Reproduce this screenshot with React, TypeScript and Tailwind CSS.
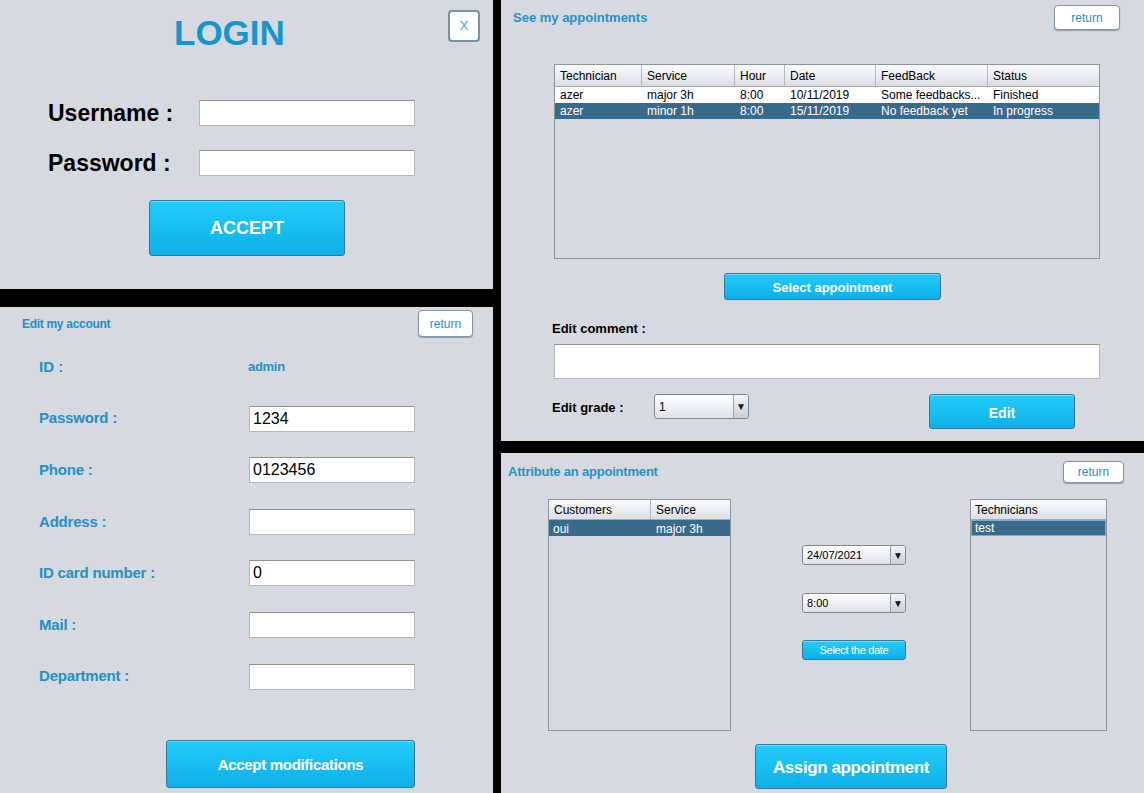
import React from 'react';

const FONT = "font-['Liberation_Sans',Arial,sans-serif]";
const PANEL = 'bg-[#d6d9df]';
const BLUE_BTN =
  'bg-linear-to-b from-[#22ccfa] to-[#0fb0e8] border border-[#3a7592] rounded-[3px] text-white font-bold flex items-center justify-center shadow-[inset_0_1px_0_rgba(255,255,255,0.35)]';
const RETURN_BTN =
  'bg-white border border-[#8194a8] rounded-[4px] shadow-[0_1px_1px_rgba(60,80,100,0.45)] text-[#2a91c6] text-[12px] flex items-center justify-center';
const FIELD = 'bg-white border border-[#b4b6b9] border-t-[#8d8f92] h-[26px] flex items-center pl-[3px] text-[16px] text-black';

const APPOINTMENTS = [
  ['azer', 'major 3h', '8:00', '10/11/2019', 'Some feedbacks...', 'Finished'],
  ['azer', 'minor 1h', '8:00', '15/11/2019', 'No feedback yet', 'In progress'],
];

const ACCOUNT_ROWS = [
  { label: 'Password :', value: '1234' },
  { label: 'Phone :', value: '0123456' },
  { label: 'Address :', value: '' },
  { label: 'ID card number :', value: '0' },
  { label: 'Mail :', value: '' },
  { label: 'Department :', value: '' },
];

function Combo({ value, className }: { value: string; className: string }) {
  return (
    <div
      className={`${className} flex rounded-[3px] border border-[#7d8894] bg-linear-to-b from-white to-[#dfe2e7] overflow-hidden`}
    >
      <div className="flex-1 flex items-center pl-[4px] text-black">{value}</div>
      <div className="w-[15px] border-l border-[#98a2ad] bg-linear-to-b from-[#f4f5f7] to-[#c9cfd7] flex items-center justify-center text-[10px] text-[#15181d]">
        ▼
      </div>
    </div>
  );
}

function HeaderCell({ children, last }: { children: React.ReactNode; last?: boolean }) {
  return (
    <div className={`pl-[5px] flex items-center ${last ? '' : 'border-r border-[#b5b9bf]'}`}>{children}</div>
  );
}

function LoginPanel() {
  return (
    <div className={`${PANEL} h-[289px] flex flex-col`}>
      <div className="h-[100px] flex items-start pt-[10px]">
        <div className="ml-[174px] mt-[5px] text-[35px] leading-none font-bold text-[#1796cc]">LOGIN</div>
        <div className="ml-auto mr-[13px] w-[32px] h-[32px] bg-white border-2 border-[#7890aa] rounded-[4px] flex items-center justify-center text-[13px] text-[#3aa3d6]">
          X
        </div>
      </div>
      <div className="flex items-center h-[26px] pl-[48px]">
        <div className="w-[151px] text-[23px] font-bold text-black">Username :</div>
        <div className={`${FIELD} w-[216px]`} />
      </div>
      <div className="flex items-center h-[26px] pl-[48px] mt-[24px]">
        <div className="w-[151px] text-[23px] font-bold text-black">Password :</div>
        <div className={`${FIELD} w-[216px]`} />
      </div>
      <div className={`${BLUE_BTN} ml-[149px] mt-[24px] w-[196px] h-[56px] text-[18px]`}>ACCEPT</div>
    </div>
  );
}

function AccountPanel() {
  return (
    <div className={`${PANEL} flex-1 flex flex-col`}>
      <div className="pt-[3px] flex items-center pl-[22px] pr-[20px]">
        <div className="text-[12px] font-bold text-[#1f8fc4] tracking-[-0.3px]">Edit my account</div>
        <div className={`${RETURN_BTN} ml-auto w-[55px] h-[27px]`}>return</div>
      </div>
      <div className="mt-[17px] flex flex-col gap-[25.6px]">
        <div className="flex items-center h-[26px] pl-[39px]">
          <div className="w-[209px] text-[15px] font-bold text-[#2590c4]">ID :</div>
          <div className="text-[13px] font-bold text-[#2590c4] tracking-[-0.3px]">admin</div>
        </div>
        {ACCOUNT_ROWS.map((row) => (
          <div key={row.label} className="flex items-center h-[26px] pl-[39px]">
            <div className="w-[210px] text-[15px] font-bold text-[#2590c4] tracking-[-0.2px]">{row.label}</div>
            <div className={`${FIELD} w-[166px]`}>{row.value}</div>
          </div>
        ))}
      </div>
      <div className={`${BLUE_BTN} ml-[166px] mt-[50px] w-[249px] h-[48px] pt-[4px] text-[15px] tracking-[-0.3px]`}>
        Accept modifications
      </div>
    </div>
  );
}

function AppointmentsPanel() {
  return (
    <div className={`${PANEL} h-[441px] flex flex-col`}>
      <div className="pt-[5px] flex items-center pl-[12px] pr-[24px]">
        <div className="text-[13px] font-bold text-[#1f93c8]">See my appointments</div>
        <div className={`${RETURN_BTN} ml-auto w-[66px] h-[25px]`}>return</div>
      </div>

      {/* table */}
      <div className="ml-[53px] mt-[34px] w-[546px] h-[195px] border border-[#8f949b] flex flex-col text-[12px] text-black">
        <div className="grid grid-cols-[87px_93px_50px_91px_112px_1fr] h-[22px] bg-linear-to-b from-[#fbfbfc] to-[#dcdfe4] border-b border-[#a3a8ae]">
          <HeaderCell>Technician</HeaderCell>
          <HeaderCell>Service</HeaderCell>
          <HeaderCell>Hour</HeaderCell>
          <HeaderCell>Date</HeaderCell>
          <HeaderCell>FeedBack</HeaderCell>
          <HeaderCell last>Status</HeaderCell>
        </div>
        {APPOINTMENTS.map((r, i) => (
          <div
            key={i}
            className={`grid grid-cols-[87px_93px_50px_91px_112px_1fr] h-[16px] items-center ${
              i === 1 ? 'bg-[#386a8c] text-white' : 'bg-white'
            }`}
          >
            {r.map((c, j) => (
              <div key={j} className="pl-[5px] whitespace-nowrap overflow-hidden">
                {c}
              </div>
            ))}
          </div>
        ))}
      </div>

      <div className={`${BLUE_BTN} ml-[223px] mt-[14px] w-[217px] h-[27px] pt-[2px] text-[13px]`}>Select appointment</div>

      <div className="ml-[51px] mt-[21px] text-[13px] font-bold text-black leading-[16px]">Edit comment :</div>
      <div className="ml-[53px] mt-[7px] w-[546px] h-[35px] bg-white border border-[#b4b6b9] border-t-[#8d8f92]" />

      <div className="flex items-start pl-[51px] mt-[15px]">
        <div className="w-[102px] h-[27px] flex items-center text-[13px] font-bold text-black">Edit grade :</div>
        <Combo value="1" className="w-[95px] h-[25px] text-[12px]" />
        <div className={`${BLUE_BTN} ml-[180px] w-[146px] h-[35px] pt-[3px] text-[14px]`}>Edit</div>
      </div>
    </div>
  );
}

function AttributePanel() {
  return (
    <div className={`${PANEL} flex-1 flex flex-col`}>
      <div className="pt-[8px] flex items-center pl-[7px] pr-[20px]">
        <div className="text-[13px] font-bold text-[#1f93c8] tracking-[-0.2px]">Attribute an appointment</div>
        <div className={`${RETURN_BTN} ml-auto w-[61px] h-[22px]`}>return</div>
      </div>

      <div className="flex mt-[16px] text-[12px] text-black">
        <div className="ml-[47px] w-[183px] h-[232px] border border-[#8f949b] flex flex-col">
          <div className="grid grid-cols-[102px_1fr] h-[20px] bg-linear-to-b from-[#fbfbfc] to-[#dcdfe4] border-b border-[#a3a8ae]">
            <HeaderCell>Customers</HeaderCell>
            <HeaderCell last>Service</HeaderCell>
          </div>
          <div className="grid grid-cols-[102px_1fr] h-[16px] items-center bg-[#386a8c] text-white">
            <div className="pl-[4px]">oui</div>
            <div className="pl-[5px]">major 3h</div>
          </div>
        </div>

        <div className="ml-[71px] w-[104px] flex flex-col pt-[46px]">
          <Combo value="24/07/2021" className="h-[20px] text-[11px]" />
          <Combo value="8:00" className="h-[20px] mt-[28px] text-[11px]" />
          <div className={`${BLUE_BTN} !font-normal h-[20px] mt-[27px] text-[11px] tracking-[-0.3px]`}>Select the date</div>
        </div>

        <div className="ml-[64px] w-[137px] h-[232px] border border-[#8f949b] flex flex-col">
          <div className="h-[20px] bg-linear-to-b from-[#fbfbfc] to-[#dcdfe4] border-b border-[#a3a8ae] flex items-center pl-[4px]">
            Technicians
          </div>
          <div className="h-[16px] flex items-center bg-[#386a8c] text-white border border-[#80a9d0] pl-[3px]">test</div>
        </div>
      </div>

      <div className={`${BLUE_BTN} ml-[254px] mt-[13px] w-[192px] h-[45px] pt-[2px] text-[17px] tracking-[-0.4px]`}>
        Assign appointment
      </div>
    </div>
  );
}

export default function App() {
  return (
    <div className={`${FONT} w-[1144px] h-[793px] bg-black flex overflow-hidden`}>
      <div className="w-[493px] flex flex-col gap-[18px]">
        <LoginPanel />
        <AccountPanel />
      </div>
      <div className="ml-[8px] flex-1 flex flex-col gap-[12px]">
        <AppointmentsPanel />
        <AttributePanel />
      </div>
    </div>
  );
}
